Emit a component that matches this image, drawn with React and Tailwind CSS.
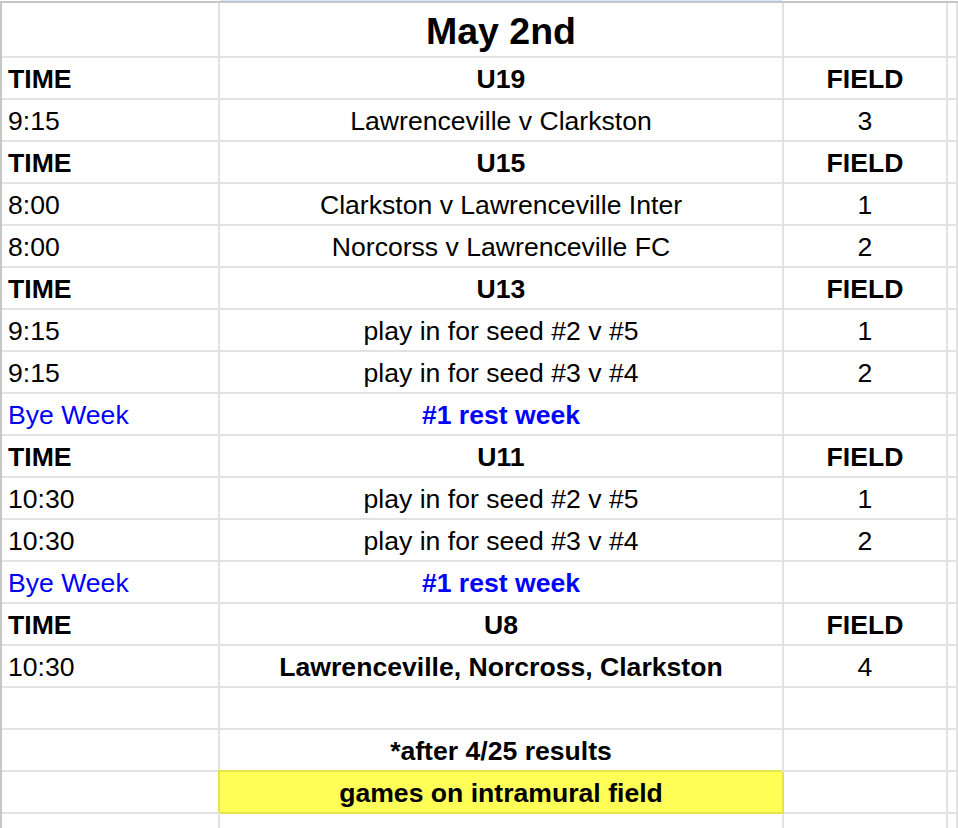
const rows = [
  { a: 'TIME', b: 'U19', c: 'FIELD', bold: true },
  { a: '9:15', b: 'Lawrenceville v Clarkston', c: '3' },
  { a: 'TIME', b: 'U15', c: 'FIELD', bold: true },
  { a: '8:00', b: 'Clarkston v Lawrenceville Inter', c: '1' },
  { a: '8:00', b: 'Norcorss v Lawrenceville FC', c: '2' },
  { a: 'TIME', b: 'U13', c: 'FIELD', bold: true },
  { a: '9:15', b: 'play in for seed #2 v #5', c: '1' },
  { a: '9:15', b: 'play in for seed #3 v #4', c: '2' },
  { a: 'Bye Week', b: '#1 rest week', c: '', bye: true },
  { a: 'TIME', b: 'U11', c: 'FIELD', bold: true },
  { a: '10:30', b: 'play in for seed #2 v #5', c: '1' },
  { a: '10:30', b: 'play in for seed #3 v #4', c: '2' },
  { a: 'Bye Week', b: '#1 rest week', c: '', bye: true },
  { a: 'TIME', b: 'U8', c: 'FIELD', bold: true },
  { a: '10:30', b: 'Lawrenceville, Norcross, Clarkston', c: '4', boldB: true },
  { a: '', b: '', c: '' },
  { a: '', b: '*after 4/25 results', c: '', boldB: true },
  { a: '', b: 'games on intramural field', c: '', boldB: true, yellow: true },
  { a: '', b: '', c: '' },
];

const cell = 'border-r-2 border-b-2 border-[#e2e2e2] flex items-center pt-[2px]';

function Row({ row }) {
  const aClass = row.bye ? 'text-[#0000ff]' : row.bold ? 'font-bold' : '';
  const bClass = row.bye
    ? 'text-[#0000ff] font-bold'
    : row.bold || row.boldB
    ? 'font-bold'
    : '';
  return (
    <div className="grid grid-cols-[218px_564px_164px_1fr] h-[42px]">
      <div className={`${cell} pl-[6px] ${aClass}`}>{row.a}</div>
      {row.yellow ? (
        <div className={`${cell} justify-center relative bg-[#ffff57] border-[#e4e44c] shadow-[-2px_-2px_0_0_#e4e44c] ${bClass}`}>
          {row.b}
        </div>
      ) : (
        <div className={`${cell} justify-center ${bClass}`}>{row.b}</div>
      )}
      <div className={`${cell} justify-center ${row.bold ? 'font-bold' : ''}`}>{row.c}</div>
      <div className={cell}></div>
    </div>
  );
}

export default function App() {
  return (
    <div className="w-[958px] h-[828px] overflow-hidden bg-white text-black text-[26.6px] leading-none font-['Liberation_Sans',Arial,sans-serif]">
      <div className="flex h-[1px]">
        <div className="w-[220px]" />
        <div className="w-[562px] bg-[#d3e3fd]" />
        <div className="flex-1" />
      </div>
      <div className="h-[2px] bg-[#c6c6c6]" />
      <div className="border-l-2 border-[#c6c6c6]">
        <div className="grid grid-cols-[218px_564px_164px_1fr] h-[55px]">
          <div className={cell}></div>
          <div className={`${cell} justify-center font-bold text-[37.5px] pt-[5px]`}>May 2nd</div>
          <div className={cell}></div>
          <div className={cell}></div>
        </div>
        {rows.map((row, i) => (
          <Row key={i} row={row} />
        ))}
      </div>
    </div>
  );
}
